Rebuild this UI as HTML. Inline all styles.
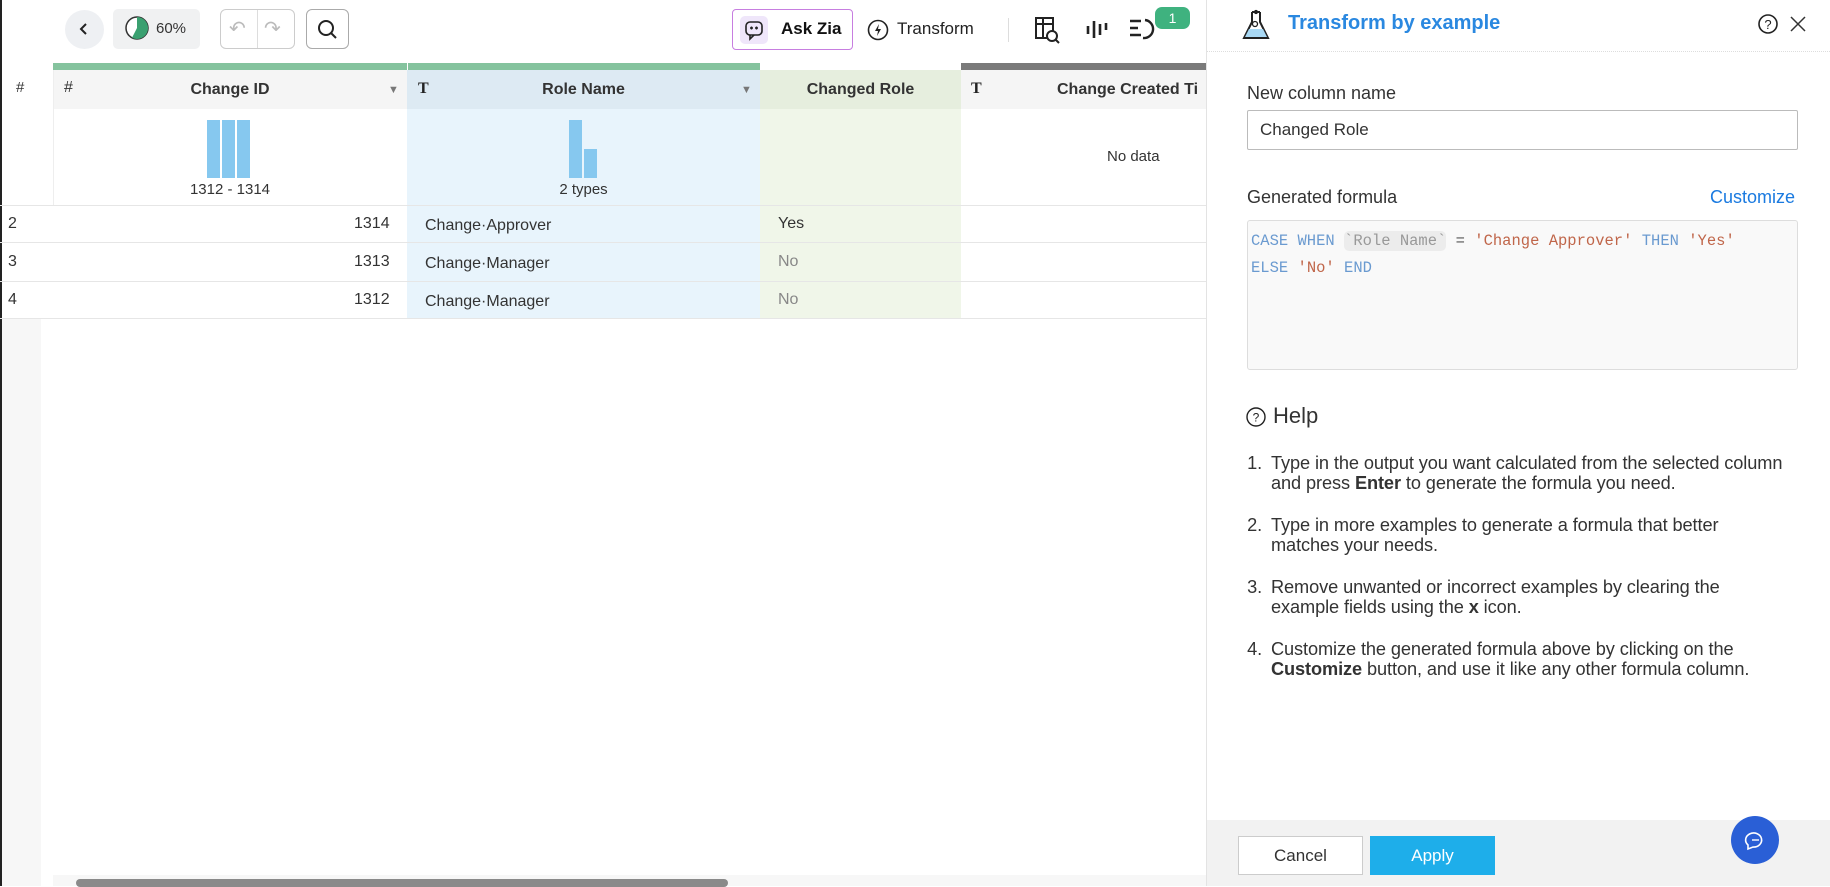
<!DOCTYPE html>
<html><head><meta charset="utf-8"><style>
*{box-sizing:border-box;margin:0;padding:0}
body{width:1830px;height:886px;overflow:hidden;background:#fff;font-family:"Liberation Sans",sans-serif;color:#222;position:relative}
.a{position:absolute}
.hd{font-weight:bold;font-size:16px;color:#333;top:70px;height:39px;line-height:39px;text-align:center}
.cell{font-size:16px;color:#333;height:37px;line-height:37px}
.hl{height:1px;background:#e6e6e6}
.help li{margin-bottom:22px;padding-left:4px}
.bar{position:absolute;background:#86c8ef;width:13px}
</style></head><body>
<div class="a" style="left:0;top:0;width:2px;height:886px;background:#222"></div>
<div class="a" style="left:2px;top:318px;width:39px;height:568px;background:#f7f7f7"></div>

<!-- toolbar -->
<div class="a" style="left:65px;top:10px;width:39px;height:39px;border-radius:50%;background:#eef0f3"></div>
<svg class="a" style="left:76px;top:21px" width="16" height="16"><path d="M10 3 L5 8 L10 13" stroke="#222" stroke-width="2" fill="none"/></svg>
<div class="a" style="left:113px;top:9px;width:87px;height:40px;border-radius:5px;background:#f0f1f2"></div>
<svg class="a" style="left:124px;top:15px" width="26" height="26"><circle cx="13" cy="13" r="11" fill="#fff" stroke="#333" stroke-width="1.5"/><path d="M13 2 A11 11 0 1 1 8 22.8 L13 13Z" fill="#3aa070"/></svg>
<div class="a" style="left:156px;top:20px;font-size:15px;color:#333">60%</div>
<div class="a" style="left:220px;top:9px;width:75px;height:40px;border:1px solid #ccc;border-radius:6px"></div>
<div class="a" style="left:257px;top:10px;width:1px;height:38px;background:#ddd"></div>
<div class="a" style="left:229px;top:16px;font-size:20px;color:#bbb">&#x21B6;</div>
<div class="a" style="left:264px;top:16px;font-size:20px;color:#bbb">&#x21B7;</div>
<div class="a" style="left:306px;top:9px;width:43px;height:40px;border:1px solid #aaa;border-radius:6px"></div>
<svg class="a" style="left:317px;top:19px" width="22" height="22"><circle cx="9" cy="9" r="7" stroke="#222" stroke-width="2" fill="none"/><path d="M14 14 L19 19" stroke="#222" stroke-width="2"/></svg>

<div class="a" style="left:732px;top:9px;width:121px;height:41px;border:1.5px solid #c77ee0;border-radius:4px"></div>
<div class="a" style="left:740px;top:16px;width:28px;height:28px;border-radius:5px;background:#efe6fa"></div>
<svg class="a" style="left:743px;top:19px" width="22" height="22"><rect x="3" y="3" width="16" height="13" rx="4" fill="none" stroke="#222" stroke-width="1.6"/><path d="M7 16 L7 20 L11 16" fill="none" stroke="#222" stroke-width="1.6"/><path d="M7 9h3M12 9h3M8.5 7.5v3M13.5 7.5v3" stroke="#222" stroke-width="1.4"/></svg>
<div class="a" style="left:781px;top:19px;font-size:17px;font-weight:bold;color:#111">Ask Zia</div>
<svg class="a" style="left:866px;top:18px" width="24" height="24"><circle cx="12" cy="12" r="9.5" stroke="#222" stroke-width="1.6" fill="none"/><path d="M13 6 L9 13 L12 13 L11 18 L15 11 L12 11Z" fill="#222"/></svg>
<div class="a" style="left:897px;top:19px;font-size:17px;color:#222">Transform</div>
<div class="a" style="left:1008px;top:18px;width:1px;height:24px;background:#ddd"></div>
<svg class="a" style="left:1033px;top:15px" width="28" height="30"><rect x="3" y="3" width="17" height="20" fill="none" stroke="#222" stroke-width="2"/><path d="M3 9h17M10 3v20" stroke="#222" stroke-width="2"/><circle cx="19" cy="21" r="5" fill="#fff" stroke="#222" stroke-width="2"/><path d="M22.5 24.5 L26 28" stroke="#222" stroke-width="2"/></svg>
<svg class="a" style="left:1085px;top:18px" width="26" height="22"><path d="M3 8v8M9 3v17M15 6v11M21 5v7" stroke="#222" stroke-width="2.6"/></svg>
<svg class="a" style="left:1128px;top:16px" width="28" height="26"><path d="M2 5h11M2 12h8M2 19h11M17 4 A9 9 0 0 1 15 22" stroke="#222" stroke-width="2.4" fill="none"/></svg>
<div class="a" style="left:1155px;top:7px;width:35px;height:22px;border-radius:7px;background:#3fb27f;color:#fff;font-size:14px;text-align:center;line-height:22px">1</div>

<!-- table -->
<div class="a" style="left:53px;top:63px;width:354px;height:7px;background:#85c39e"></div>
<div class="a" style="left:408px;top:63px;width:352px;height:7px;background:#85c39e"></div>
<div class="a" style="left:961px;top:63px;width:246px;height:7px;background:#7a7a7a"></div>
<div class="a" style="left:53px;top:70px;width:354px;height:135px;background:#fff"></div>
<div class="a" style="left:53px;top:70px;width:354px;height:39px;background:#f5f5f5"></div>
<div class="a" style="left:407px;top:70px;width:353px;height:248px;background:#e8f4fc"></div>
<div class="a" style="left:407px;top:70px;width:353px;height:39px;background:#ddeaf3"></div>
<div class="a" style="left:760px;top:70px;width:201px;height:248px;background:#f0f6e9"></div>
<div class="a" style="left:760px;top:70px;width:201px;height:39px;background:#e6eede"></div>
<div class="a" style="left:961px;top:70px;width:246px;height:39px;background:#f5f5f5"></div>
<div class="a" style="left:53px;top:70px;width:1px;height:135px;background:#eee"></div>

<div class="a" style="left:16px;top:79px;font-size:15px;color:#333">#</div>
<div class="a" style="left:64px;top:79px;font-size:16px;color:#333">#</div>
<div class="a hd" style="left:53px;width:354px">Change ID</div>
<div class="a" style="left:388px;top:84px;font-size:11px;color:#777">&#9660;</div>
<div class="a" style="left:418px;top:80px;font-size:16px;font-weight:bold;font-family:'Liberation Serif',serif">T</div>
<div class="a hd" style="left:407px;width:353px">Role Name</div>
<div class="a" style="left:741px;top:84px;font-size:11px;color:#777">&#9660;</div>
<div class="a hd" style="left:760px;width:201px">Changed Role</div>
<div class="a" style="left:971px;top:80px;font-size:16px;font-weight:bold;font-family:'Liberation Serif',serif">T</div>
<div class="a hd" style="left:1057px;text-align:left;white-space:nowrap;width:150px;overflow:hidden">Change Created Ti</div>

<div class="bar" style="left:207px;top:120px;height:58px"></div>
<div class="bar" style="left:222px;top:120px;height:58px"></div>
<div class="bar" style="left:237px;top:120px;height:58px"></div>
<div class="a" style="left:53px;top:181px;width:354px;text-align:center;font-size:15px;color:#333">1312 - 1314</div>
<div class="bar" style="left:569px;top:120px;height:58px"></div>
<div class="bar" style="left:584px;top:149px;height:29px"></div>
<div class="a" style="left:407px;top:181px;width:353px;text-align:center;font-size:15px;color:#333">2 types</div>
<div class="a" style="left:1107px;top:148px;font-size:15px;color:#333">No data</div>

<div class="a hl" style="left:0;top:205px;width:1207px"></div>
<div class="a hl" style="left:0;top:242px;width:1207px"></div>
<div class="a hl" style="left:0;top:281px;width:1207px"></div>
<div class="a hl" style="left:0;top:318px;width:1207px"></div>

<div class="a cell" style="left:8px;top:205px">2</div>
<div class="a cell" style="left:8px;top:243px">3</div>
<div class="a cell" style="left:8px;top:281px">4</div>
<div class="a cell" style="left:354px;top:205px">1314</div>
<div class="a cell" style="left:354px;top:243px">1313</div>
<div class="a cell" style="left:354px;top:281px">1312</div>
<div class="a cell" style="left:425px;top:207px">Change·Approver</div>
<div class="a cell" style="left:425px;top:245px">Change·Manager</div>
<div class="a cell" style="left:425px;top:283px">Change·Manager</div>
<div class="a cell" style="left:778px;top:205px">Yes</div>
<div class="a cell" style="left:778px;top:243px;color:#888">No</div>
<div class="a cell" style="left:778px;top:281px;color:#888">No</div>

<div class="a" style="left:53px;top:875px;width:1154px;height:11px;background:#f7f7f7"></div>
<div class="a" style="left:76px;top:879px;width:652px;height:8px;border-radius:4px;background:#8a8a8a"></div>

<!-- panel -->
<div class="a" style="left:1206px;top:0;width:1px;height:886px;background:#e3e3e3"></div>
<div class="a" style="left:1207px;top:51px;width:623px;border-top:1px dotted #ddd"></div>
<svg class="a" style="left:1240px;top:8px" width="32" height="32"><path d="M12 4 L12 14 L4 30 L28 30 L20 14 L20 4" fill="none" stroke="#222" stroke-width="2"/><path d="M9 21 L23 21 L27 29 L5 29Z" fill="#a9d9f5"/><circle cx="15" cy="16" r="2.5" fill="none" stroke="#222" stroke-width="1.3"/><circle cx="16" cy="4" r="1.5" fill="none" stroke="#222" stroke-width="1.2"/><path d="M12 4 L20 4" stroke="#222" stroke-width="2"/></svg>
<div class="a" style="left:1288px;top:12px;font-size:20px;font-weight:bold;color:#2a88e0">Transform by example</div>
<svg class="a" style="left:1757px;top:13px" width="22" height="22"><circle cx="11" cy="11" r="9" fill="none" stroke="#222" stroke-width="1.6"/><text x="11" y="16" text-anchor="middle" font-size="13" font-family="Liberation Sans" fill="#222">?</text></svg>
<svg class="a" style="left:1788px;top:14px" width="20" height="20"><path d="M3 3 L17 17 M17 3 L3 17" stroke="#333" stroke-width="1.5"/></svg>

<div class="a" style="left:1247px;top:83px;font-size:18px;color:#333">New column name</div>
<div class="a" style="left:1247px;top:110px;width:551px;height:40px;border:1px solid #bbb;border-radius:2px;padding-left:12px;line-height:38px;font-size:17px;color:#333">Changed Role</div>
<div class="a" style="left:1247px;top:187px;font-size:18px;color:#333">Generated formula</div>
<div class="a" style="left:1710px;top:187px;font-size:18px;color:#1a7ae0">Customize</div>
<div class="a" style="left:1247px;top:220px;width:551px;height:150px;border:1px solid #ddd;border-radius:3px;background:#f9f9f9"></div>
<div class="a" style="left:1251px;top:228px;font-family:'Liberation Mono',monospace;font-size:15.5px;line-height:26.5px;color:#6a9ad0;white-space:pre">CASE WHEN <span style="background:#ececec;color:#999;border-radius:5px;padding:1px 0">`Role Name`</span> <span style="color:#555">=</span> <span style="color:#c0664a">'Change Approver'</span> THEN <span style="color:#c0664a">'Yes'</span>
ELSE <span style="color:#c0664a">'No'</span> END</div>

<svg class="a" style="left:1245px;top:406px" width="22" height="22"><circle cx="11" cy="11" r="9" fill="none" stroke="#222" stroke-width="1.4"/><text x="11" y="15.5" text-anchor="middle" font-size="12" font-family="Liberation Sans" fill="#222">?</text></svg>
<div class="a" style="left:1273px;top:403px;font-size:22px;color:#333">Help</div>
<ol class="a help" style="left:1247px;top:453px;width:540px;font-size:18.2px;line-height:20px;color:#333;padding-left:20px;letter-spacing:-0.1px">
<li>Type in the output you want calculated from the selected column and press <b>Enter</b> to generate the formula you need.</li>
<li>Type in more examples to generate a formula that better matches your needs.</li>
<li>Remove unwanted or incorrect examples by clearing the example fields using the <b>x</b> icon.</li>
<li>Customize the generated formula above by clicking on the <b>Customize</b> button, and use it like any other formula column.</li>
</ol>

<div class="a" style="left:1207px;top:820px;width:623px;height:66px;background:#f2f2f2"></div>
<div class="a" style="left:1238px;top:836px;width:125px;height:39px;background:#fff;border:1px solid #ccc;text-align:center;line-height:37px;font-size:17px;color:#333">Cancel</div>
<div class="a" style="left:1370px;top:836px;width:125px;height:39px;background:#1eaeea;text-align:center;line-height:39px;font-size:17px;color:#fff">Apply</div>
<div class="a" style="left:1731px;top:816px;width:48px;height:48px;border-radius:50%;background:#2a5fd6"></div>
<svg class="a" style="left:1743px;top:828px" width="24" height="24"><path d="M5 17 A8 7 0 1 1 10 19 L5 21Z" fill="none" stroke="#fff" stroke-width="1.6"/><path d="M9 12h7" stroke="#fff" stroke-width="1.4"/></svg>
</body></html>
